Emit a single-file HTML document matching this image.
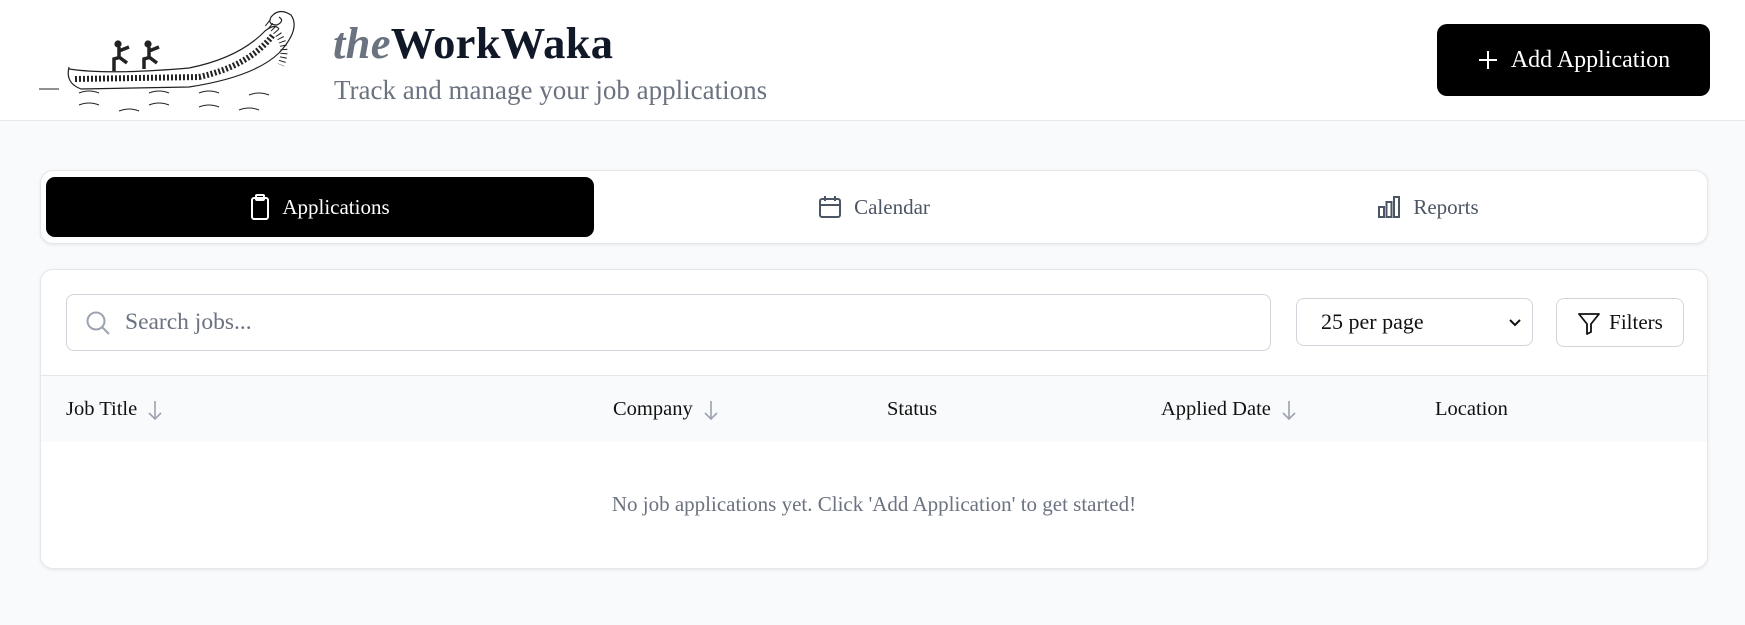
<!DOCTYPE html>
<html><head><meta charset="utf-8"><style>
*{box-sizing:border-box;margin:0;padding:0}
body{width:1745px;height:625px;background:#f9fafb;font-family:"Liberation Serif",serif;color:#111;overflow:hidden;position:relative}
.hdr{position:absolute;left:0;top:0;width:1745px;height:121px;background:#fff;border-bottom:1px solid #e5e7eb}
.title{position:absolute;left:333px;top:17px;font-size:44.5px;font-weight:bold;color:#111827;letter-spacing:0.3px}
.title i{color:#6b7280}
.sub{position:absolute;left:334px;top:75px;font-size:27px;color:#6b7280}
.btn{position:absolute;left:1437px;top:24px;width:273px;height:72px;background:#000;border-radius:10px;color:#fff;font-size:24px;display:flex;align-items:center;justify-content:center;gap:12px}
.card{position:absolute;left:40px;width:1668px;background:#fff;border:1px solid #e5e7eb;border-radius:13px;box-shadow:0 1px 3px rgba(0,0,0,.08)}
.tab{position:absolute;top:6px;height:60px;width:548px;display:flex;align-items:center;justify-content:center;gap:12px;font-size:21px;color:#4b5563}
.tab.act{background:#000;color:#fff;border-radius:9px;left:5px}
.search{position:absolute;left:25px;top:24px;width:1205px;height:57px;border:1px solid #d1d5db;border-radius:8px;display:flex;align-items:center;padding-left:18px;gap:14px;font-size:23.5px;color:#6b7280}
.sel{position:absolute;left:1255px;top:28px;width:237px;height:48px;border:1px solid #d1d5db;border-radius:8px;font-size:22px;display:flex;align-items:center;padding-left:24px}
.filt{position:absolute;left:1515px;top:28px;width:128px;height:49px;border:1px solid #d1d5db;border-radius:8px;font-size:21px;display:flex;align-items:center;justify-content:center;gap:8px}
.th{position:absolute;left:0;top:105px;width:1666px;height:67px;background:#f9fafb;border-top:1px solid #e5e7eb}
.th span{position:absolute;top:22px;font-size:20.5px;display:flex;align-items:center;gap:10px}
.empty{position:absolute;left:0;width:1666px;top:222px;text-align:center;font-size:21px;color:#6b7280}
</style></head><body>
<div class="hdr">
<svg style="position:absolute;left:39px;top:9px" width="270" height="104" viewBox="0 0 270 104" fill="none" stroke="#222" stroke-width="1.2">
<path d="M30 58 Q26 74 42 80 L150 78 Q215 68 240 44 Q262 20 252 6 Q240 -2 232 8 Q228 16 238 16 Q246 12 240 8"/>
<path d="M30 60 Q70 66 150 59 Q200 49 226 22 Q236 14 240 20" />
<path d="M36 70 L160 68 Q210 57 234 26" stroke-dasharray="2 2" stroke-width="6"/>
<path d="M228 14 Q252 32 242 56" stroke-width="7" stroke-dasharray="1 3"/>
<path d="M75 62 L75 50 L82 48 M80 38 L80 48 L88 54 M80 42 L90 38" stroke-width="3.5"/>
<circle cx="79" cy="35" r="3" fill="#222"/>
<path d="M105 60 L105 50 L112 48 M110 38 L110 48 L118 54 M110 42 L120 38" stroke-width="3.5"/>
<circle cx="109" cy="35" r="3" fill="#222"/>
<path d="M0 80 L20 80 M40 84 Q50 80 60 84 M110 84 Q120 80 130 84 M160 84 Q170 80 180 84 M210 86 Q220 82 230 86 M40 96 Q50 92 60 96 M110 96 Q120 92 130 96 M160 98 Q170 94 180 98 M80 102 Q90 98 100 102 M200 101 Q210 97 220 101" stroke-width="1"/>
</svg>
<div class="title"><i>the</i>WorkWaka</div>
<div class="sub">Track and manage your job applications</div>
<div class="btn"><svg width="22" height="22" viewBox="0 0 22 22" stroke="#fff" stroke-width="2"><path d="M11 2V20M2 11H20"/></svg>Add Application</div>
</div>
<div class="card" style="top:170px;height:74px">
<div class="tab act"><svg width="20" height="26" viewBox="0 0 20 26" fill="none" stroke="#fff" stroke-width="2"><rect x="2" y="4" width="16" height="21" rx="2"/><rect x="6" y="1" width="8" height="5" rx="1"/></svg>Applications</div>
<div class="tab" style="left:559px"><svg width="24" height="24" viewBox="0 0 24 24" fill="none" stroke="#4b5563" stroke-width="2"><rect x="2" y="4" width="20" height="18" rx="2"/><path d="M2 10H22M7 1V6M17 1V6"/></svg>Calendar</div>
<div class="tab" style="left:1113px"><svg width="24" height="24" viewBox="0 0 24 24" fill="none" stroke="#4b5563" stroke-width="2"><rect x="2" y="12" width="5" height="10"/><rect x="9.5" y="7" width="5" height="15"/><rect x="17" y="2" width="5" height="20"/></svg>Reports</div>
</div>
<div class="card" style="top:269px;height:300px">
<div class="search"><svg width="26" height="26" viewBox="0 0 26 26" fill="none" stroke="#9ca3af" stroke-width="2"><circle cx="11" cy="11" r="8.5"/><path d="M17.5 17.5L24 24"/></svg>Search jobs...</div>
<div class="sel">25 per page<svg style="position:absolute;right:10px;top:19px" width="14" height="10" viewBox="0 0 14 10" fill="none" stroke="#111" stroke-width="2"><path d="M2 2L7 7L12 2"/></svg></div>
<div class="filt"><svg width="24" height="24" viewBox="0 0 24 24" fill="none" stroke="#111" stroke-width="1.8" stroke-linejoin="round"><path d="M2 3H22L14 13V21L10 23V13Z"/></svg>Filters</div>
<div class="th">
<span style="left:25px">Job Title <svg width="16" height="20" viewBox="0 0 16 20" fill="none" stroke="#9ca3af" stroke-width="1.6"><path d="M8 1V19M2 13L8 19L14 13"/></svg></span>
<span style="left:572px">Company <svg width="16" height="20" viewBox="0 0 16 20" fill="none" stroke="#9ca3af" stroke-width="1.6"><path d="M8 1V19M2 13L8 19L14 13"/></svg></span>
<span style="left:846px">Status</span>
<span style="left:1120px">Applied Date <svg width="16" height="20" viewBox="0 0 16 20" fill="none" stroke="#9ca3af" stroke-width="1.6"><path d="M8 1V19M2 13L8 19L14 13"/></svg></span>
<span style="left:1394px">Location</span>
</div>
<div class="empty">No job applications yet. Click 'Add Application' to get started!</div>
</div>
</body></html>
